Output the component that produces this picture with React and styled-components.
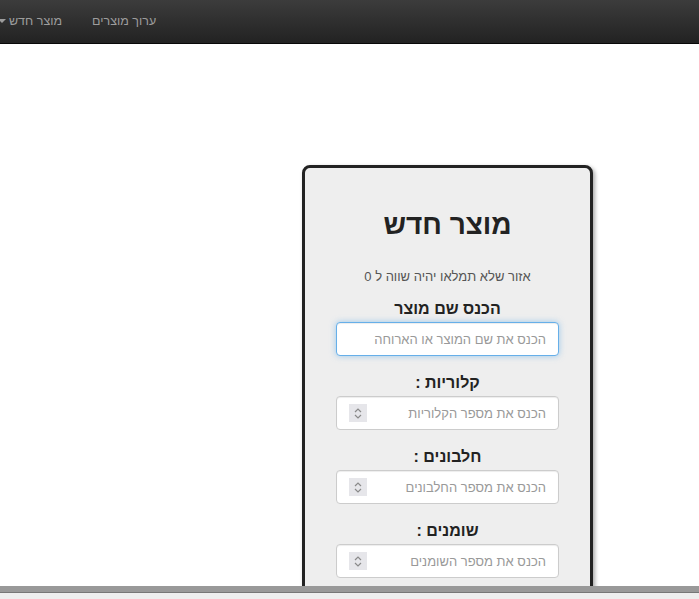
import React from 'react';
import styled, { createGlobalStyle } from 'styled-components';

const GlobalStyle = createGlobalStyle`
    html, body {
        margin: 0;
        padding: 0;
        background: #fff;
        font-family: "Liberation Sans", Arial, sans-serif;
        font-size: 14px;
        color: #333;
        overflow: hidden;
    }
`;

const fields = [
    { label: 'קלוריות :', placeholder: 'הכנס את מספר הקלוריות' },
    { label: 'חלבונים :', placeholder: 'הכנס את מספר החלבונים' },
    { label: 'שומנים :', placeholder: 'הכנס את מספר השומנים' },
];

const App = () => {
    return (
        <div>
            <GlobalStyle />
            <NavBar>
                <Menu>
                    <MenuItem>ערוך מוצרים</MenuItem>
                    <MenuItem>
                        מוצר חדש
                        <Caret />
                    </MenuItem>
                </Menu>
            </NavBar>
            <Card>
                <Title>מוצר חדש</Title>
                <Note>אזור שלא תמלאו יהיה שווה ל 0</Note>
                <Label first>הכנס שם מוצר</Label>
                <TextInput focused placeholder="הכנס את שם המוצר או הארוחה" />
                {fields.map((f, index) => (
                    <div key={index}>
                        <Label>{f.label}</Label>
                        <NumberBox>
                            <BareInput placeholder={f.placeholder} />
                            <Spinner>
                                <svg width="10" height="13" viewBox="0 0 10 13">
                                    <path d="M2 5 L5 2 L8 5" fill="none" stroke="#8a8a8a" strokeWidth="1.2" />
                                    <path d="M2 8 L5 11 L8 8" fill="none" stroke="#8a8a8a" strokeWidth="1.2" />
                                </svg>
                            </Spinner>
                        </NumberBox>
                    </div>
                ))}
            </Card>
            <BottomBar />
        </div>
    );
};

const NavBar = styled.div`
    height: 43px;
    display: flex;
    justify-content: flex-start;
    background: linear-gradient(to bottom, #3c3c3c 0%, #222 100%);
    border-bottom: 1px solid #080808;
    overflow: hidden;
`;

const Menu = styled.ul`
    direction: rtl;
    display: flex;
    list-style: none;
    margin: 0 0 0 -17px;
    padding: 0;
`;

const MenuItem = styled.li`
    display: flex;
    align-items: center;
    padding: 10px 15px 12px;
    line-height: 20px;
    font-size: 12.5px;
    color: #9d9d9d;
    white-space: nowrap;
`;

const Caret = styled.span`
    display: inline-block;
    width: 0;
    height: 0;
    margin-right: 3px;
    border-top: 4px solid #9d9d9d;
    border-left: 4px solid transparent;
    border-right: 4px solid transparent;
`;

const Card = styled.div`
    direction: rtl;
    width: 291px;
    height: 600px;
    margin: 121px 0 0 302px;
    padding: 0 31px;
    box-sizing: border-box;
    background: #eee;
    border: 3px solid #222;
    border-radius: 8px;
    box-shadow: 2px 2px 4px rgba(0, 0, 0, 0.35);
`;

const Title = styled.h1`
    margin: 40px 0 0;
    text-align: center;
    font-size: 28px;
    line-height: 34px;
    font-weight: bold;
    color: #222;
`;

const Note = styled.p`
    margin: 25px 0 0;
    text-align: center;
    font-size: 13px;
    line-height: 20px;
    color: #555;
`;

const Label = styled.label`
    display: block;
    margin: ${props => props.first ? '12px' : '17px'} 0 3px;
    text-align: center;
    font-size: 16px;
    line-height: 20px;
    font-weight: bold;
    color: #222;
`;

const TextInput = styled.input`
    display: block;
    width: 100%;
    height: 34px;
    box-sizing: border-box;
    padding: 6px 12px;
    font-family: "Liberation Sans", Arial, sans-serif;
    font-size: 13px;
    color: #555;
    background: #fff;
    border: 1px solid ${props => props.focused ? '#66afe9' : '#ccc'};
    border-radius: 4px;
    outline: none;
    box-shadow: ${props => props.focused
        ? 'inset 0 1px 1px rgba(0,0,0,.075), 0 0 6px rgba(102,175,233,.6)'
        : 'inset 0 1px 1px rgba(0,0,0,.075)'};
    &::placeholder {
        color: #999;
    }
`;

const NumberBox = styled.div`
    display: flex;
    align-items: center;
    height: 34px;
    box-sizing: border-box;
    padding: 0 12px;
    background: #fff;
    border: 1px solid #ccc;
    border-radius: 4px;
    box-shadow: inset 0 1px 1px rgba(0,0,0,.075);
`;

const BareInput = styled.input`
    flex: 1;
    min-width: 0;
    border: none;
    outline: none;
    padding: 0;
    background: transparent;
    font-family: "Liberation Sans", Arial, sans-serif;
    font-size: 13px;
    color: #555;
    &::placeholder {
        color: #999;
    }
`;

const Spinner = styled.span`
    display: flex;
    align-items: center;
    justify-content: center;
    width: 18px;
    height: 18px;
    margin-right: 8px;
    background: #e6e6ea;
`;

const BottomBar = styled.div`
    position: fixed;
    left: 0;
    right: 0;
    bottom: 0;
    height: 7px;
    background: #eee;
    border-top: 6px solid #999;
    box-shadow: inset 0 1px 0 #777;
`;

export default App;
